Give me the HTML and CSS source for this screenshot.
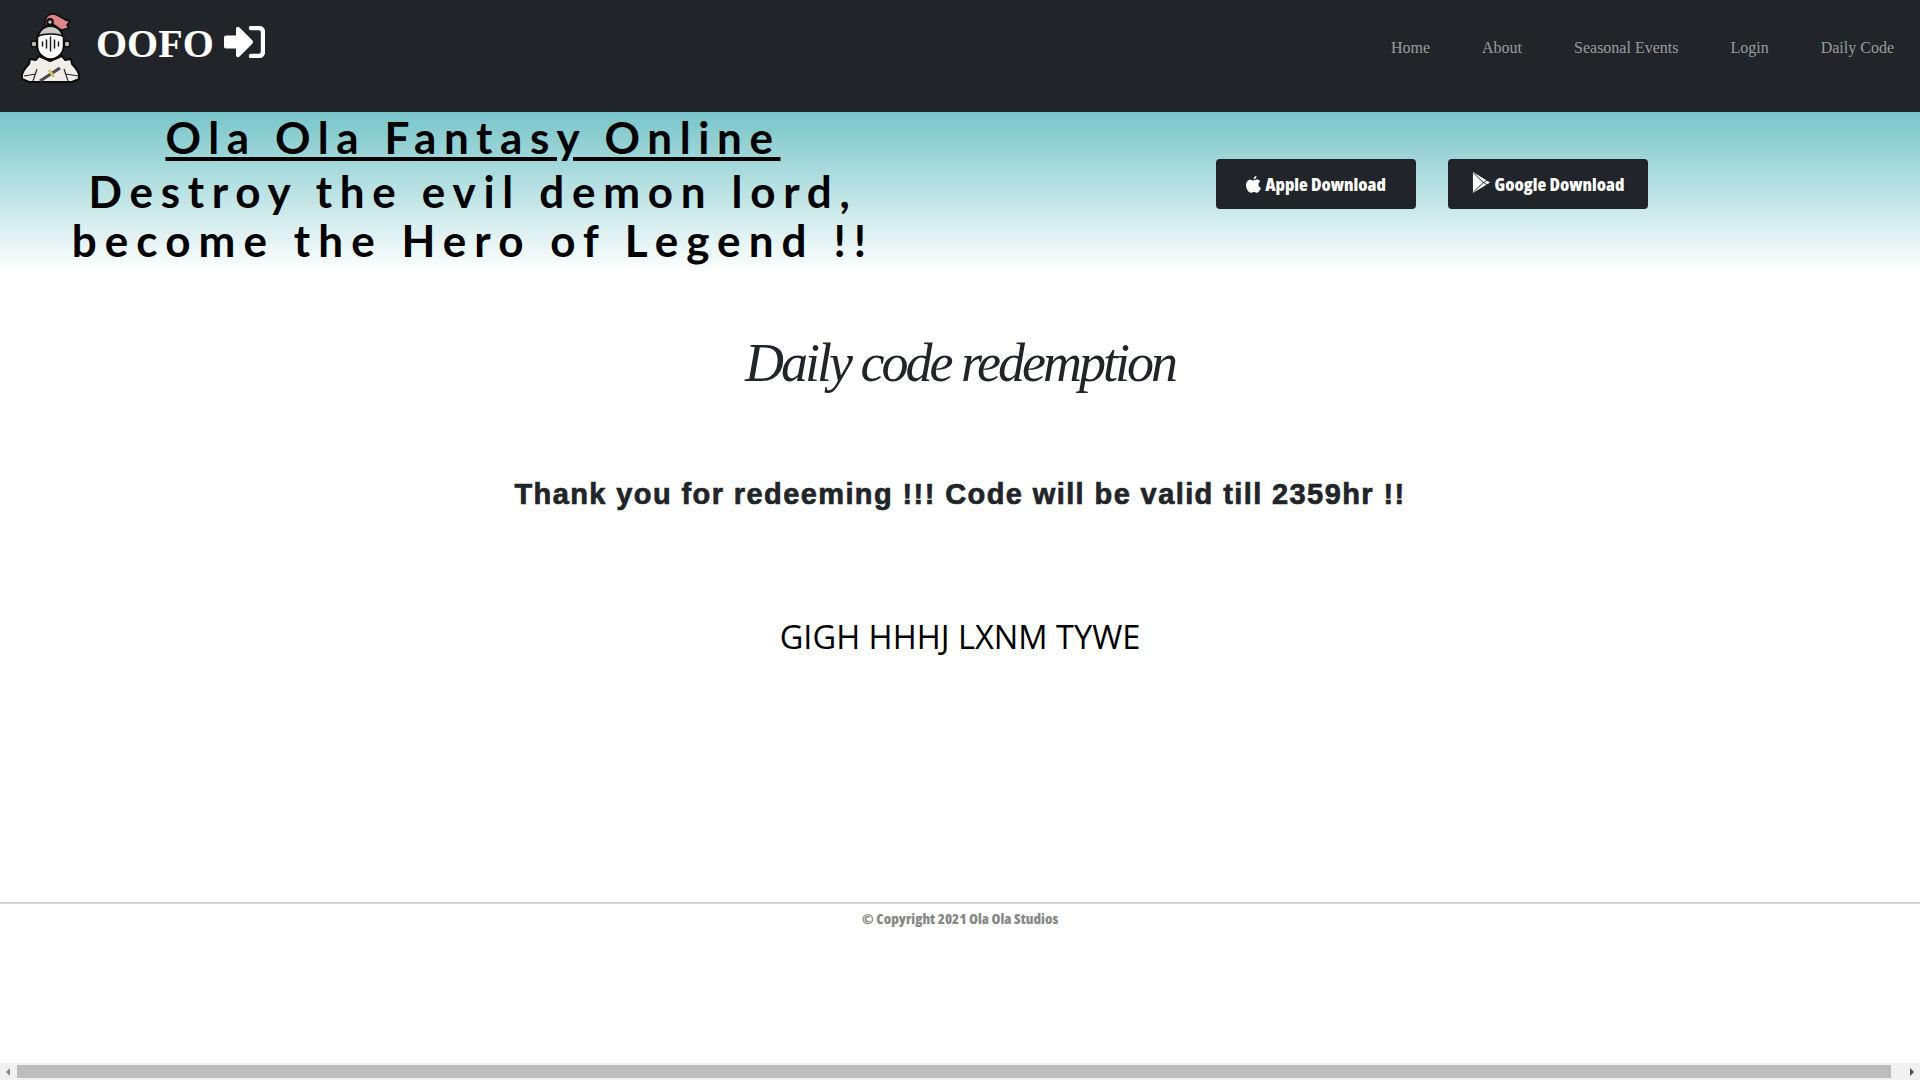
FILE: index.html
```html
<!DOCTYPE html>
<html lang="en">
<head>
<meta charset="utf-8">
<title>Ola Ola Fantasy Online</title>
<link rel="stylesheet" href="styles.css">
</head>
<body>
<nav class="navbar">
  <a class="brand" href="#">
    <svg class="knight" viewBox="20 12 62 72" width="62" height="72" aria-hidden="true">
      <path d="M45 24c-1-6 3-10 8-10 6 0 9 6 17 7l-3 4 2 3-7 2c-4-1-7-6-11-6-2 0-4 1-4 3z" fill="#e08585" stroke="#0c0c0c" stroke-width="1.6" stroke-linejoin="round"/>
      <circle cx="50" cy="22" r="3.2" fill="#2a2a2a" stroke="#0c0c0c" stroke-width="1.4"/>
      <circle cx="50" cy="22" r="1.600" fill="#cfcbc6"/>
      <path d="M22 76c0-5 4-9 7-12l1-5 6 1 3-4 11 5 12-5 3 4 6-1 1 5c3 3 7 7 7 12v3l-7 3H29l-7-3z" fill="#f1eeea" stroke="#0c0c0c" stroke-width="2" stroke-linejoin="round"/>
      <path d="M24 76l12-2M78 76l-12-2M33 81l4-12M68 81l-4-12" stroke="#2a2a2a" stroke-width="1.200" fill="none"/>
      <path d="M40 81l20-13" stroke="#4b4b4f" stroke-width="3.200"/>
      <path d="M49 70l5 7" stroke="#d9c074" stroke-width="3"/>
      <circle cx="34" cy="44" r="3" fill="#bdb9b4" stroke="#0c0c0c" stroke-width="1.500"/>
      <circle cx="67" cy="44" r="3" fill="#bdb9b4" stroke="#0c0c0c" stroke-width="1.500"/>
      <path d="M37 44c0-11 5-18 13.500-18S64 33 64 44c0 8-6 15-13.500 15S37 52 37 44z" fill="#ccc8c3" stroke="#0c0c0c" stroke-width="1.800"/>
      <path d="M37.500 37c4-4 22-4 26 0v9c0 7-6 13-13 13s-13-6-13-13z" fill="#fafafa" stroke="#0c0c0c" stroke-width="1.500"/>
      <path d="M50.500 37v14M46.500 40v8M54.500 40v8M42.500 42v4M58.500 42v4" stroke="#222" stroke-width="1.500" stroke-linecap="round"/>
    </svg>
    <span class="brand-name">OOFO</span>
    <svg class="brand-icon" viewBox="0 0 42 32" width="42" height="32" aria-hidden="true">
      <path d="M1 11.500a2 2 0 0 1 2-2h10V3c0-2 2-3 3.500-1.500L29 14a2.800 2.800 0 0 1 0 4L16.500 30.500C15 32 13 31 13 29v-6.500H3a2 2 0 0 1-2-2z" fill="#fff"/>
      <path d="M28 2h8a4 4 0 0 1 4 4v20a4 4 0 0 1-4 4h-8" fill="none" stroke="#fff" stroke-width="4.400" stroke-linecap="round"/>
    </svg>
  </a>
  <ul class="nav-links">
    <li><a href="#">Home</a></li>
    <li><a href="#">About</a></li>
    <li><a href="#">Seasonal Events</a></li>
    <li><a href="#">Login</a></li>
    <li><a href="#">Daily Code</a></li>
  </ul>
</nav>
<header class="hero">
  <div class="hero-text">
    <h1 class="hero-title">Ola Ola Fantasy Online</h1>
    <p class="hero-line hero-line-a">Destroy the evil demon lord,</p>
    <p class="hero-line hero-line-b">become the Hero of Legend !!</p>
  </div>
  <div class="hero-actions">
    <a class="store-btn" href="#">
      <svg viewBox="0 0 16 18" width="15" height="17" aria-hidden="true"><path d="M11.200 0c.1 1.700-1.300 3.400-3.100 3.500C7.900 1.800 9.500.2 11.200 0zM8 4.700c.8 0 1.900-1 3.500-1 1.300 0 2.900.7 3.700 2-2.900 1.800-2.400 5.800.8 7-.8 2.200-2.500 5-4.300 5-1.200 0-1.700-.8-3.200-.8s-2 .8-3.200.8C2.600 17.700 0 13.300 0 9.800c0-3.600 2.300-5.900 4.600-5.900 1.500 0 2.600.8 3.400.8z" fill="#fff"/></svg>
      <span>Apple Download</span>
    </a>
    <a class="store-btn store-btn-play" href="#">
      <svg viewBox="0 0 20 22" width="19" height="21" aria-hidden="true"><path d="M1 0l18 11L1 22z" fill="#fff"/><path d="M1.500 1L12 11 1.500 21M12 11l5-3M12 11l5 3" fill="none" stroke="#212529" stroke-width="1"/></svg>
      <span>Google Download</span>
    </a>
  </div>
</header>
<main class="content">
  <h2 class="page-title">Daily code redemption</h2>
  <p class="thanks">Thank you for redeeming !!! Code will be valid till 2359hr !!</p>
  <p class="code">GIGH HHHJ LXNM TYWE</p>
</main>
<footer class="footer">© Copyright 2021 Ola Ola Studios</footer>
<div class="hscroll" aria-hidden="true">
  <span class="arrow arrow-left"></span>
  <span class="thumb"></span>
  <span class="arrow arrow-right"></span>
</div>
</body>
</html>
```
FILE: styles.css
```css
* { box-sizing: border-box; }
html, body { margin: 0; padding: 0; overflow: hidden; }
body { height: 1080px; background: #fff; color: #212529; font-family: "Liberation Serif", serif; }
a { text-decoration: none; color: inherit; }

.navbar { height: 112px; background: #212529; display: flex; justify-content: space-between; padding: 12px 26px 0 20px; }
.brand { display: flex; align-items: flex-start; color: #fff; }
.knight { display: block; }
.brand-name { font-size: 40px; font-weight: 700; line-height: 46px; margin-left: 14px; margin-top: 9px; }
.brand-icon { margin-left: 9px; margin-top: 14px; }
.nav-links { list-style: none; display: flex; gap: 52px; margin: 0; padding: 24px 0 0; font-size: 16px; line-height: 24px; color: rgba(255,255,255,.55); }

.hero { height: 160px; display: flex; background: linear-gradient(180deg, #78c5c9 0%, #ffffff 100%); }
.hero-text { width: 946px; text-align: center; color: #000; font-family: "Lato", sans-serif; font-weight: 700; padding-top: 1px; }
.hero-title { margin: 0 0 6px; font-size: 44px; line-height: 48px; font-weight: 700; letter-spacing: 7.6px; text-decoration: underline; }
.hero-line { margin: 0; font-size: 44px; line-height: 49px; }
.hero-line-a { letter-spacing: 7.7px; }
.hero-line-b { letter-spacing: 8.07px; }
.hero-actions { display: flex; gap: 32px; margin-left: 270px; padding-top: 47px; }
.store-btn { width: 200px; height: 50px; background: #212529; border-radius: 4px; display: flex; align-items: center; justify-content: center; gap: 4px; color: #fff; font-family: "Open Sans", sans-serif; font-stretch: condensed; font-weight: 800; font-size: 18px; }
.store-btn span { margin-bottom: 1px; }
.store-btn-play svg { margin-bottom: 3px; }

.content { text-align: center; }
.page-title { margin: 0; padding-top: 55px; height: 150px; font-size: 54px; line-height: 72px; letter-spacing: -3px; font-weight: 400; font-style: italic; font-family: "Liberation Serif", serif; }
.thanks { margin: 0; padding-top: 54px; height: 193px; font-family: "Liberation Sans", sans-serif; font-weight: 700; font-size: 29px; line-height: 36px; letter-spacing: 1.4px; -webkit-text-stroke: 0.7px #212529; }
.code { margin: 0; height: 287px; padding-top: 0; font-family: "Open Sans", sans-serif; font-size: 32.6px; line-height: 44px; color: #000; }

.footer { border-top: 2px solid #d2d3d4; padding-top: 5px; text-align: center; font-family: "Open Sans", sans-serif; font-stretch: condensed; font-weight: 800; font-size: 14.5px; line-height: 20px; color: #888; }

.hscroll { position: fixed; left: 0; right: 0; bottom: 0; height: 17px; padding: 2px 0; background: #f1f1f1; display: flex; align-items: stretch; }
.thumb { flex: 1; background: #bcbcbc; margin-right: 12px; }
.arrow { width: 17px; flex: none; position: relative; }
.arrow::before { content: ""; position: absolute; top: 3px; border-style: solid; border-width: 4px 4px 4px 0; border-color: transparent #8a8a8a transparent transparent; left: 6px; }
.arrow-right::before { border-width: 4px 0 4px 4px; border-color: transparent transparent transparent #505050; left: 7px; }
```
